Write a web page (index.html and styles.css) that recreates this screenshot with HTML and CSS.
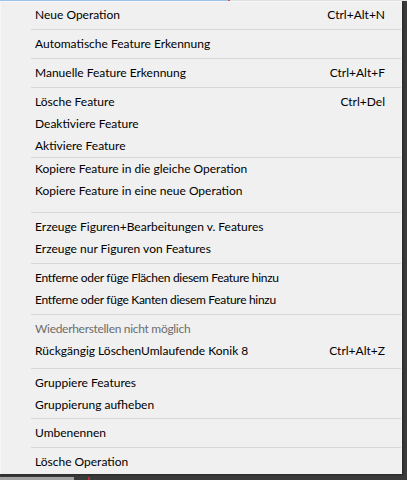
FILE: index.html
```html
<!DOCTYPE html>
<html>
<head>
<meta charset="utf-8">
<link rel="stylesheet" href="styles.css">
</head>
<body>
<div class="screen">
  <div class="topstrip"><div class="ts-blue"></div><div class="ts-red"></div></div>
  <div class="menu">
    <div class="item"><span class="label">Neue Operation</span><span class="key">Ctrl+Alt+N</span></div>
    <div class="sep"></div>
    <div class="item"><span class="label">Automatische Feature Erkennung</span></div>
    <div class="sep"></div>
    <div class="item"><span class="label">Manuelle Feature Erkennung</span><span class="key">Ctrl+Alt+F</span></div>
    <div class="sep"></div>
    <div class="item"><span class="label">Lösche Feature</span><span class="key">Ctrl+Del</span></div>
    <div class="item"><span class="label">Deaktiviere Feature</span></div>
    <div class="item"><span class="label">Aktiviere Feature</span></div>
    <div class="sep sep-tight"></div>
    <div class="item"><span class="label">Kopiere Feature in die gleiche Operation</span></div>
    <div class="item"><span class="label">Kopiere Feature in eine neue Operation</span></div>
    <div class="sep sep-gap"></div>
    <div class="item"><span class="label">Erzeuge Figuren+Bearbeitungen v. Features</span></div>
    <div class="item"><span class="label">Erzeuge nur Figuren von Features</span></div>
    <div class="sep"></div>
    <div class="item narrow"><span class="label">Entferne oder füge Flächen diesem Feature hinzu</span></div>
    <div class="item narrow"><span class="label">Entferne oder füge Kanten diesem Feature hinzu</span></div>
    <div class="sep"></div>
    <div class="item disabled narrow"><span class="label">Wiederherstellen nicht möglich</span></div>
    <div class="item"><span class="label">Rückgängig LöschenUmlaufende Konik 8</span><span class="key">Ctrl+Alt+Z</span></div>
    <div class="sep sep-tall"></div>
    <div class="item"><span class="label">Gruppiere Features</span></div>
    <div class="item"><span class="label">Gruppierung aufheben</span></div>
    <div class="sep sep-short"></div>
    <div class="item"><span class="label">Umbenennen</span></div>
    <div class="sep"></div>
    <div class="item"><span class="label">Lösche Operation</span></div>
  </div>
  <div class="bottomstrip"><div class="bs-left"></div><div class="bs-red"></div></div>
</div>
</body>
</html>
```
FILE: styles.css
```css
html, body {
  margin: 0;
  padding: 0;
  background: #3a3a3a;
}
.screen {
  width: 407px;
  height: 480px;
  overflow: hidden;
  background: #3a3a3a;
  font-family: "Lato", "Open Sans", sans-serif;
  font-size: 12px;
  color: #000;
}
.topstrip {
  height: 1px;
  display: flex;
  background: #e6e6e6;
}
.ts-blue {
  width: 228px;
  background: #9cc3ea;
}
.ts-red {
  width: 2px;
  background: #d85050;
}
.menu {
  width: 402px;
  background: #f0f0f0;
  border-left: 1px solid #f7f7f7;
  border-top: 1px solid #f7f7f7;
  padding: 2px 0 1px 0;
  box-sizing: border-box;
  box-shadow: 1px 1px 2px rgba(0,0,0,0.35);
}
.item {
  height: 22px;
  display: flex;
  align-items: center;
  justify-content: space-between;
  padding: 0 17px 1px 34px;
  box-sizing: border-box;
  white-space: nowrap;
}
.narrow .label {
  letter-spacing: -0.3px;
}
.disabled {
  color: #6d6d6d;
}
.sep {
  height: 7px;
  display: flex;
  flex-direction: column;
  justify-content: center;
  padding-left: 30px;
  padding-right: 1px;
  box-sizing: border-box;
}
.sep::before {
  content: "";
  display: block;
  height: 1px;
  background: #d7d7d7;
}
.sep-tight {
  height: 1px;
}
.sep-gap {
  height: 14px;
  padding-top: 6px;
}
.sep-tall {
  height: 10px;
  padding-top: 3px;
}
.sep-short {
  height: 6px;
  padding-bottom: 1px;
}
.bottomstrip {
  margin-top: 3px;
  height: 4px;
  display: flex;
}
.bs-left {
  width: 74px;
  background: #a3a3a3;
}
.bs-red {
  width: 2px;
  margin-left: 14px;
  background: #b03030;
}
```
